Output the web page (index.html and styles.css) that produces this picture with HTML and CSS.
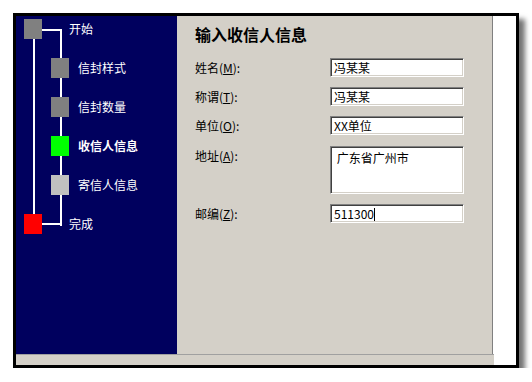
FILE: index.html
```html
<!DOCTYPE html>
<html lang="zh-CN">
<head>
    <meta charset="UTF-8">
    <title>信封向导</title>
    <link rel="stylesheet" href="styles.css">
</head>
<body>

    <div class="wizard">
        <div class="wizard-main">
            <div class="steps">
                <!-- 连接线 -->
                <div class="line line-left"></div>
                <div class="line line-top"></div>
                <div class="line line-right"></div>
                <div class="line line-bottom"></div>

                <div class="step">
                    <span class="box"></span>
                    <span class="step-name">开始</span>
                </div>
                <div class="step sub">
                    <span class="box"></span>
                    <span class="step-name">信封样式</span>
                </div>
                <div class="step sub">
                    <span class="box"></span>
                    <span class="step-name">信封数量</span>
                </div>
                <div class="step sub current">
                    <span class="box"></span>
                    <span class="step-name">收信人信息</span>
                </div>
                <div class="step sub todo">
                    <span class="box"></span>
                    <span class="step-name">寄信人信息</span>
                </div>
                <div class="step finish">
                    <span class="box"></span>
                    <span class="step-name">完成</span>
                </div>
            </div>

            <div class="panel">
                <h2>输入收信人信息</h2>

                <div class="form-row">
                    <label>姓名(<u>M</u>):</label>
                    <div class="edit">冯某某</div>
                </div>
                <div class="form-row">
                    <label>称谓(<u>T</u>):</label>
                    <div class="edit">冯某某</div>
                </div>
                <div class="form-row">
                    <label>单位(<u>O</u>):</label>
                    <div class="edit">XX单位</div>
                </div>
                <div class="form-row address">
                    <label>地址(<u>A</u>):</label>
                    <div class="edit multi">&nbsp;广东省广州市</div>
                </div>
                <div class="form-row">
                    <label>邮编(<u>Z</u>):</label>
                    <div class="edit">511300<span class="caret"></span></div>
                </div>
            </div>

            <div class="blank"></div>
        </div>
        <div class="wizard-bottom"></div>
    </div>

</body>
</html>
```

FILE: styles.css
```css
* {
    margin: 0;
    padding: 0;
    box-sizing: border-box;
}

body {
    background: #fff;
    font-family: "Noto Sans CJK SC", "Liberation Sans", sans-serif;
    font-size: 12px;
}

.wizard {
    margin: 13px 0 0 13px;
    width: 506px;
    height: 355px;
    border: 3px solid #000;
    background: #fff;
    box-shadow: 6px 6px 5px rgba(0, 0, 0, 0.55);
    display: flex;
    flex-direction: column;
}

.wizard-main {
    display: flex;
    height: 338px;
}

/* 左侧步骤树 */
.steps {
    position: relative;
    width: 161px;
    background: #00005e;
    padding-top: 3px;
}

.line {
    position: absolute;
    background: #fff;
}

.line-left {
    left: 17px;
    top: 23px;
    width: 2px;
    height: 175px;
}

.line-top {
    left: 26px;
    top: 13px;
    width: 20px;
    height: 2px;
}

.line-right {
    left: 44px;
    top: 13px;
    width: 2px;
    height: 197px;
}

.line-bottom {
    left: 26px;
    top: 207px;
    width: 20px;
    height: 2px;
}

.step {
    position: relative;
    display: flex;
    align-items: center;
    height: 20px;
    margin-bottom: 19px;
    color: #fff;
    line-height: 20px;
}

.box {
    width: 18px;
    height: 20px;
    margin-left: 8px;
    background: #808080;
}

.step-name {
    margin-left: 27px;
}

.sub .box {
    margin-left: 35px;
}

.sub .step-name {
    margin-left: 9px;
}

.current .box {
    background: #00ff00;
}

.current .step-name {
    font-weight: bold;
}

.todo .box {
    background: #c0c0c0;
}

.finish .box {
    background: #ff0000;
}

/* 右侧表单 */
.panel {
    width: 316px;
    background: #d4d0c8;
    border-right: 1px solid #808080;
    padding: 8px 0 0 18px;
}

.panel h2 {
    font-size: 16px;
    font-weight: bold;
    line-height: 20px;
    color: #000;
    margin-bottom: 14px;
}

.form-row {
    display: flex;
    align-items: flex-start;
    margin-bottom: 10px;
}

.form-row label {
    width: 135px;
    line-height: 19px;
    color: #000;
}

.form-row.address {
    margin-top: 11px;
}

.edit {
    width: 134px;
    height: 19px;
    background: #fff;
    border-top: 1px solid #808080;
    border-left: 1px solid #808080;
    border-bottom: 1px solid #fff;
    border-right: 1px solid #fff;
    box-shadow: inset 1px 1px 0 #404040, inset -1px -1px 0 #d4d0c8;
    padding-left: 3px;
    line-height: 17px;
    color: #000;
    white-space: nowrap;
}

.edit.multi {
    height: 48px;
    padding-top: 2px;
}

.caret {
    display: inline-block;
    width: 1px;
    height: 13px;
    background: #000;
    vertical-align: -2px;
}

.blank {
    flex: 1;
    background: #fff;
}

.wizard-bottom {
    width: 478px;
    height: 11px;
    border-top: 1px solid #a0a0a0;
    background: #d4d0c8;
}
```
